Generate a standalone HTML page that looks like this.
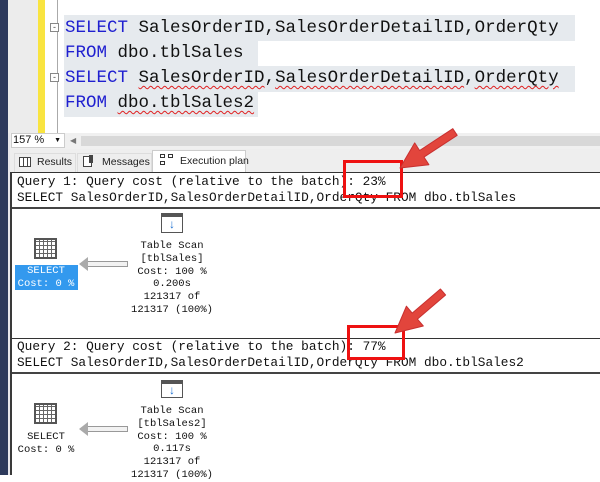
<!DOCTYPE html>
<html><head><meta charset="utf-8"><style>
*{margin:0;padding:0;box-sizing:border-box}
body{width:600px;height:475px;position:relative;overflow:hidden;background:#fff;font-family:"Liberation Sans",sans-serif}
.a{position:absolute}
.code{position:absolute;left:65px;font-family:"Liberation Mono",monospace;font-size:17.5px;line-height:25px;color:#111;white-space:pre}
.k{color:#1f1fd0}
.sq{text-decoration:underline wavy #e02020;text-decoration-thickness:1px;text-underline-offset:3px}
.m{position:absolute;font-family:"Liberation Mono",monospace;font-size:12.8px;color:#111;white-space:pre;line-height:14px}
.c{position:absolute;font-family:"Liberation Mono",monospace;font-size:10.5px;color:#111;white-space:pre;text-align:center;line-height:12.8px;width:110px}
.t{white-space:nowrap}
</style></head><body>
<div class="a" style="left:0;top:0;width:8px;height:475px;background:#2d3a5c"></div>
<div class="a" style="left:8px;top:0;width:3px;height:475px;background:#e8e8ec"></div>
<div class="a" style="left:10px;top:172px;width:2px;height:303px;background:#3a3a3a"></div>
<!-- editor -->
<div class="a" style="left:8px;top:0;width:30px;height:133px;background:#ececec"></div>
<div class="a" style="left:38px;top:0;width:7px;height:133px;background:#f9e440"></div>
<div class="a" style="left:57px;top:0;width:1px;height:133px;background:#aaa"></div>
<div class="a" style="left:64px;top:15px;width:511px;height:26px;background:#e6eaee"></div>
<div class="a" style="left:64px;top:41px;width:194px;height:25px;background:#e6eaee"></div>
<div class="a" style="left:64px;top:66px;width:511px;height:26px;background:#e6eaee"></div>
<div class="a" style="left:64px;top:92px;width:194px;height:25px;background:#e6eaee"></div>
<div class="a" style="left:50px;top:23px;width:9px;height:9px;border:1px solid #888;background:#fff;font-size:9px;line-height:6px;text-align:center;color:#444">-</div>
<div class="a" style="left:50px;top:73px;width:9px;height:9px;border:1px solid #888;background:#fff;font-size:9px;line-height:6px;text-align:center;color:#444">-</div>
<div class="code" style="top:16px"><span class="k">SELECT</span> SalesOrderID,SalesOrderDetailID,OrderQty</div>
<div class="code" style="top:41px"><span class="k">FROM</span> dbo.tblSales</div>
<div class="code" style="top:66px"><span class="k">SELECT</span> <span class="sq">SalesOrderID</span>,<span class="sq">SalesOrderDetailID</span>,<span class="sq">OrderQty</span></div>
<div class="code" style="top:91px"><span class="k">FROM</span> <span class="sq">dbo.tblSales2</span></div>
<!-- zoom bar -->
<div class="a" style="left:10px;top:133px;width:590px;height:16px;background:#f0f0f0"></div>
<div class="a" style="left:11px;top:133px;width:54px;height:15px;background:#fff;border:1px solid #ccc;font-size:11px;line-height:13px;padding-left:1px;color:#111">157 %<span style="position:absolute;right:3px;font-size:7px">▼</span></div>
<div class="a" style="left:70px;top:136px;font-size:8px;color:#777">◀</div>
<div class="a" style="left:81px;top:136px;width:519px;height:10px;background:#d8d8d8"></div>
<!-- tabs -->
<div class="a" style="left:10px;top:149px;width:590px;height:23px;background:#eeeeee"></div>
<div class="a t" style="left:14px;top:153px;width:62px;height:19px;border:1px solid #ddd;border-bottom:none;font-size:10.5px;line-height:17px;padding-left:22px;color:#222">Results</div>
<div class="a" style="left:19px;top:157px;width:12px;height:10px;border:1px solid #444;background:repeating-linear-gradient(90deg,#fff 0 3px,#444 3px 4px)"></div>
<div class="a t" style="left:77px;top:153px;width:75px;height:19px;border:1px solid #ddd;border-bottom:none;font-size:10.5px;line-height:17px;padding-left:24px;color:#222">Messages</div>
<div class="a" style="left:83px;top:156px;width:9px;height:11px;border:1px solid #444;background:#fff"></div>
<div class="a" style="left:89px;top:155px;width:4px;height:8px;background:#444"></div>
<div class="a t" style="left:152px;top:150px;width:94px;height:23px;background:#fff;border:1px solid #ccc;border-bottom:none;font-size:10.5px;line-height:20px;padding-left:27px;color:#222">Execution plan</div>
<div class="a" style="left:160px;top:154px;width:5px;height:4px;border:1px solid #333"></div>
<div class="a" style="left:168px;top:154px;width:5px;height:4px;border:1px solid #333"></div>
<div class="a" style="left:160px;top:161px;width:5px;height:4px;border:1px solid #333"></div>
<!-- query 1 -->
<div class="a" style="left:12px;top:172px;width:588px;height:1px;background:#333"></div>
<div class="m" style="left:17px;top:175px">Query 1: Query cost (relative to the batch): 23%</div>
<div class="m" style="left:17px;top:191px">SELECT SalesOrderID,SalesOrderDetailID,OrderQty FROM dbo.tblSales</div>
<div class="a" style="left:12px;top:207px;width:588px;height:2px;background:#444"></div>
<div class="a" style="left:161px;top:213px;width:22px;height:20px;border:1px solid #555;border-top:4px solid #555;background:#fff;color:#1a6fd0;font-size:12px;line-height:14px;text-align:center;font-weight:bold">↓</div>
<div class="c" style="left:117px;top:240px">Table Scan
[tblSales]
Cost: 100 %
0.200s
121317 of
121317 (100%)</div>
<div class="a" style="left:34px;top:238px;width:23px;height:21px;border:2px solid #555;background:repeating-linear-gradient(90deg,transparent 0 3px,#666 3px 4px),repeating-linear-gradient(0deg,#fff 0 3px,#666 3px 4px)"></div>
<div class="a" style="left:15px;top:265px;width:63px;height:25px;background:#3399ee"></div>
<div class="c" style="left:-9px;top:265px;color:#fff">SELECT
Cost: 0 %</div>
<div class="a" style="left:87px;top:261px;width:41px;height:6px;background:#f2f2f2;border:1px solid #999;border-left:none"></div>
<div class="a" style="left:79px;top:257px;width:0;height:0;border-top:7px solid transparent;border-bottom:7px solid transparent;border-right:9px solid #aaa"></div>
<!-- query 2 -->
<div class="a" style="left:12px;top:338px;width:588px;height:1px;background:#333"></div>
<div class="m" style="left:17px;top:340px">Query 2: Query cost (relative to the batch): 77%</div>
<div class="m" style="left:17px;top:356px">SELECT SalesOrderID,SalesOrderDetailID,OrderQty FROM dbo.tblSales2</div>
<div class="a" style="left:12px;top:372px;width:588px;height:2px;background:#444"></div>
<div class="a" style="left:161px;top:380px;width:22px;height:18px;border:1px solid #555;border-top:4px solid #555;background:#fff;color:#1a6fd0;font-size:12px;line-height:13px;text-align:center;font-weight:bold">↓</div>
<div class="c" style="left:117px;top:405px">Table Scan
[tblSales2]
Cost: 100 %
0.117s
121317 of
121317 (100%)</div>
<div class="a" style="left:34px;top:403px;width:23px;height:21px;border:2px solid #555;background:repeating-linear-gradient(90deg,transparent 0 3px,#666 3px 4px),repeating-linear-gradient(0deg,#fff 0 3px,#666 3px 4px)"></div>
<div class="c" style="left:-9px;top:431px">SELECT
Cost: 0 %</div>
<div class="a" style="left:87px;top:426px;width:41px;height:6px;background:#f2f2f2;border:1px solid #999;border-left:none"></div>
<div class="a" style="left:79px;top:422px;width:0;height:0;border-top:7px solid transparent;border-bottom:7px solid transparent;border-right:9px solid #aaa"></div>
<!-- overlays -->
<svg class="a" style="left:0;top:0" width="600" height="475">
<rect x="344.5" y="161.5" width="57" height="35" fill="none" stroke="#ee1111" stroke-width="3"/>
<rect x="348.5" y="326.5" width="55" height="32" fill="none" stroke="#ee1111" stroke-width="3"/>
<polygon points="457.2,135.3 424,157.1 428.9,164.7 400,168 414.7,142.9 419.6,150.5 452.8,128.7" fill="#e2453c" stroke="#c83030" stroke-width="1" stroke-linejoin="round"/>
<polygon points="445.6,295 417.4,319.1 423.3,326 395,333 406.4,306.2 412.2,313.1 440.4,289" fill="#e2453c" stroke="#c83030" stroke-width="1" stroke-linejoin="round"/>
</svg>
</body></html>
